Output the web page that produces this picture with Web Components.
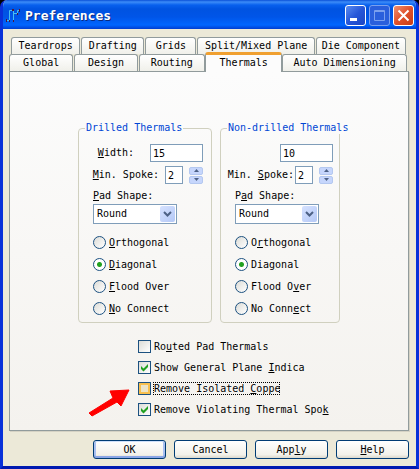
<!DOCTYPE html>
<html lang="en">
<head>
<meta charset="utf-8">
<title>Preferences</title>
<style>
    body{
        margin:0;
        background:#000;
        color:#000;
        font:10px/12px "DejaVu Sans Mono","Liberation Mono",monospace;
    }
</style>
</head>
<body>

<pref-window caption="Preferences">
    <tab-row slot="tabs" back>
        <tab-item size="69">Teardrops</tab-item>
        <tab-item size="63">Drafting</tab-item>
        <tab-item size="51">Grids</tab-item>
        <tab-item size="117">Split/Mixed Plane</tab-item>
        <tab-item size="90">Die Component</tab-item>
    </tab-row>
    <tab-row slot="tabs">
        <tab-item size="64">Global</tab-item>
        <tab-item size="63">Design</tab-item>
        <tab-item size="66">Routing</tab-item>
        <tab-item size="77" active>Thermals</tab-item>
        <tab-item size="124">Auto Dimensioning</tab-item>
    </tab-row>

    <thermals-page></thermals-page>

    <dialog-button slot="buttons" primary>OK</dialog-button>
    <dialog-button slot="buttons">Cancel</dialog-button>
    <dialog-button slot="buttons">App<u>l</u>y</dialog-button>
    <dialog-button slot="buttons"><u>H</u>elp</dialog-button>
</pref-window>

<template id="window-template">
    <style>
        :host{
            display:flex;
            flex-direction:column;
            box-sizing:border-box;
            min-height:100vh;
            background:#ece9d8;
            border:3px solid #0831d9;
            border-top:0;
            border-bottom-color:#0019b0;
            border-radius:7px 7px 0 0;
            overflow:hidden;
        }
        header{
            display:flex;
            align-items:center;
            gap:3px;
            height:29px;
            margin:0 -3px;
            padding:2px 5px 0 6px;
            box-sizing:border-box;
            background:linear-gradient(#0a50d8 0,#3c8cf8 2px,#0860ee 5px,#0053e1 9px,#0055e8 17px,#0066ff 25px,#003dd0 29px);
        }
        h1{
            flex:1;
            margin:0;
            font-size:13px;
            line-height:16px;
            padding-left:1px;
            color:#fff;
            text-shadow:1px 1px #0a2a80;
        }
        header button{
            width:21px;
            height:21px;
            padding:0;
            border:1px solid #fff;
            border-radius:3px;
            background:linear-gradient(135deg,#5a8cf0,#2656d8 50%,#1c46c4);
        }
        header button:disabled{
            border-color:#7ba0ee;
            background:#2a5fdc;
        }
        header .close{
            background:linear-gradient(135deg,#f09070,#e0512c 50%,#c83c14);
        }
        header svg{
            display:block;
        }
        .body{
            flex:1;
            display:flex;
            flex-direction:column;
            padding:8px 7px 7px 6px;
        }
        .panel{
            flex:1;
            border:1px solid #919b9c;
            box-shadow:1px 1px #d5d2c4;
            background:linear-gradient(#fcfcfc,#f4f2ee);
        }
        footer{
            display:flex;
            justify-content:flex-end;
            gap:8px;
            margin-top:9px;
        }
    </style>
    <header>
        <svg width="15" height="15" viewBox="0 0 15 15" fill="none">
            <path d="M1 12.5H3.500V2.500H7.500V6M7.500 13V5.500H11.500V2.500H14" stroke="#48c0f0"/>
            <path d="M0 11h1v3H0zM3 12h1v2H3zM6 1h2v2H6zM7 12h1v2H7zM13 1h1v3h-1zM11 5h1v2h-1z" fill="#501838"/>
        </svg>
        <h1></h1>
        <button aria-label="Minimize"><svg width="19" height="19"><path d="M4 12h7v3H4z" fill="#fff"/></svg></button>
        <button aria-label="Maximize" disabled><svg width="19" height="19" fill="none" stroke="#7ba0ee"><path d="M4.500 4.500h10v10h-10zM4 5.500h11"/></svg></button>
        <button class="close" aria-label="Close"><svg width="19" height="19" stroke="#fff" stroke-width="2"><path d="M4.500 4.500l10 10M14.500 4.500l-10 10"/></svg></button>
    </header>
    <div class="body">
        <nav role="tablist"><slot name="tabs"></slot></nav>
        <div class="panel"><slot></slot></div>
        <footer><slot name="buttons"></slot></footer>
    </div>
</template>

<template id="page-template">
    <style>
        :host{
            display:block;
            padding:50px 0 14px;
        }
        .content{
            position:relative;
            width:fit-content;
            margin:0 auto;
        }
        .groups{
            display:flex;
            gap:8px;
        }
        .checks{
            display:flex;
            flex-direction:column;
            gap:8px;
            margin:17px 0 0 60px;
        }
        .arrow{
            position:absolute;
            left:10px;
            bottom:-2px;
        }
    </style>
    <div class="content">
        <div class="groups">
            <thermal-group caption="Drilled Thermals" value="15" widthlabel="&lt;u&gt;W&lt;/u&gt;idth:"
                spoke="&lt;u&gt;M&lt;/u&gt;in. Spoke:" shape="&lt;u&gt;P&lt;/u&gt;ad Shape:"
                options="&lt;u&gt;O&lt;/u&gt;rthogonal|&lt;u&gt;D&lt;/u&gt;iagonal|&lt;u&gt;F&lt;/u&gt;lood Over|&lt;u&gt;N&lt;/u&gt;o Connect"></thermal-group>
            <thermal-group narrow caption="Non-drilled Thermals" value="10"
                spoke="Min. &lt;u&gt;S&lt;/u&gt;poke:" shape="P&lt;u&gt;a&lt;/u&gt;d Shape:"
                options="O&lt;u&gt;r&lt;/u&gt;thogonal|Dia&lt;u&gt;g&lt;/u&gt;onal|Flood O&lt;u&gt;v&lt;/u&gt;er|No Conn&lt;u&gt;e&lt;/u&gt;ct"></thermal-group>
        </div>
        <div class="checks">
            <check-option>Ro<u>u</u>ted Pad Thermals</check-option>
            <check-option checked>Show General Plane <u>I</u>ndica</check-option>
            <check-option focused>Remove Isolated <u>C</u>oppe</check-option>
            <check-option checked>Remove Violating Thermal Spo<u>k</u></check-option>
        </div>
        <svg class="arrow" width="42" height="30" viewBox="0 0 42 30">
            <path d="M1 25L25 10L22 3L41 2L33 18L29 14L4 28z" fill="#f00" stroke="#f00"/>
        </svg>
    </div>
</template>

<script>
class PrefWindow extends HTMLElement{
    constructor(){
        super()
        this.attachShadow({mode:"open"})
    }
    connectedCallback(){
        let plantilla = document.getElementById("window-template")
        this.shadowRoot.appendChild(plantilla.content.cloneNode(true))
        this.shadowRoot.querySelector("h1").textContent = this.getAttribute("caption")
    }
}

class TabRow extends HTMLElement{
    constructor(){
        super()
        this.attachShadow({mode:"open"})
    }
    connectedCallback(){
        this.shadowRoot.innerHTML = `
            <style>
                :host{
                    display:flex;
                    gap:1px;
                    height:17px;
                    margin-right:2px;
                }
                :host([back]){
                    margin-left:2px;
                    margin-right:3px;
                }
            </style>
            <slot></slot>
        `
    }
}

class TabItem extends HTMLElement{
    constructor(){
        super()
        this.attachShadow({mode:"open"})
    }
    connectedCallback(){
        this.style.setProperty("--size",this.getAttribute("size"))
        this.shadowRoot.innerHTML = `
            <style>
                :host{
                    display:flex;
                    flex:var(--size) 1 0;
                    min-width:0;
                }
                button{
                    flex:1;
                    min-width:0;
                    padding:0;
                    border:1px solid #919b9c;
                    border-bottom:0;
                    border-radius:3px 3px 0 0;
                    background:linear-gradient(#fff,#f0f0ea);
                    color:inherit;
                    font:inherit;
                    white-space:nowrap;
                }
                :host([active]){
                    z-index:1;
                    margin:-2px -1px -1px;
                }
                :host([active]) button{
                    padding-bottom:2px;
                    border-top:3px solid #f0a030;
                    background:#fcfcfc;
                }
            </style>
            <button role="tab" aria-selected="${this.hasAttribute("active")}"><slot></slot></button>
        `
    }
}

class DialogButton extends HTMLElement{
    constructor(){
        super()
        this.attachShadow({mode:"open"})
    }
    connectedCallback(){
        this.shadowRoot.innerHTML = `
            <style>
                :host{
                    display:block;
                }
                button{
                    display:block;
                    width:73px;
                    height:19px;
                    padding:0;
                    border:1px solid #003c74;
                    border-radius:3px;
                    background:linear-gradient(#fff,#f2f1ea 80%,#dcd8cc);
                    color:inherit;
                    font:inherit;
                }
                :host([primary]) button{
                    box-shadow:inset 0 1px #cee0fa,inset 0 -2px #8ba6e6,inset 2px 0 #a9c0f0,inset -2px 0 #a9c0f0;
                }
            </style>
            <button><slot></slot></button>
        `
    }
}

class CheckOption extends HTMLElement{
    constructor(){
        super()
        this.attachShadow({mode:"open"})
    }
    connectedCallback(){
        this.shadowRoot.innerHTML = `
            <style>
                :host{
                    display:block;
                    height:13px;
                }
                label{
                    display:flex;
                    align-items:center;
                    gap:2px;
                    width:fit-content;
                }
                .box{
                    display:grid;
                }
                input,svg{
                    grid-area:1/1;
                }
                input{
                    appearance:none;
                    width:13px;
                    height:13px;
                    margin:0;
                    border:1px solid #1c5180;
                    background:linear-gradient(135deg,#dcdcd7,#fff);
                }
                svg{
                    display:none;
                    pointer-events:none;
                }
                input:checked + svg{
                    display:block;
                }
                .text{
                    height:13px;
                    line-height:14px;
                    padding-left:1px;
                    white-space:nowrap;
                    overflow:hidden;
                }
                :host([focused]) input{
                    background:#ece4c8;
                    box-shadow:inset 0 0 0 2px #f8c050;
                }
                :host([focused]) .text{
                    outline:1px dotted #000;
                    outline-offset:-1px;
                }
            </style>
            <label>
                <span class="box">
                    <input type="checkbox" ${this.hasAttribute("checked") ? "checked" : ""}>
                    <svg width="13" height="13" fill="#21a121"><path d="M3 5l2.500 2.500L10 3v3l-4.500 4.500L3 8z"/></svg>
                </span>
                <span class="text"><slot></slot></span>
            </label>
        `
    }
}

class ThermalGroup extends HTMLElement{
    constructor(){
        super()
        this.attachShadow({mode:"open"})
    }
    connectedCallback(){
        let attr = (name) => this.getAttribute(name)
        let radios = attr("options").split("|").map((text,i) => `
            <label class="radio"><input type="radio" name="connect" ${i === 1 ? "checked" : ""}>${text}</label>
        `).join("")

        this.shadowRoot.innerHTML = `
            <style>
                :host{
                    display:block;
                    width:134px;
                    --gap:6px;
                    --edge:8px;
                }
                :host([narrow]){
                    width:120px;
                    --gap:1px;
                    --edge:6px;
                }
                fieldset{
                    min-width:0;
                    margin:0;
                    padding:10px var(--edge) 7px 14px;
                    border:1px solid #d0d0bf;
                    border-radius:4px;
                }
                legend{
                    margin-left:-8px;
                    padding:0 1px;
                    color:#0046d5;
                    white-space:nowrap;
                }
                :host([narrow]) legend{
                    min-width:122px;
                    box-sizing:border-box;
                }
                .row{
                    display:flex;
                    justify-content:flex-end;
                    align-items:center;
                    height:18px;
                    margin-bottom:4px;
                    white-space:nowrap;
                }
                .width{
                    gap:16px;
                }
                input,select{
                    box-sizing:border-box;
                    border:1px solid #7f9db9;
                    border-radius:0;
                    background:#fff;
                    color:inherit;
                    font:inherit;
                }
                input[type=text]{
                    width:53px;
                    height:18px;
                    padding:0 2px;
                }
                input[type=text].spoke{
                    width:18px;
                    margin-left:var(--gap);
                }
                .spin{
                    display:grid;
                    gap:1px;
                    margin-left:6px;
                }
                .spin button{
                    width:14px;
                    height:8px;
                    padding:0;
                    border:1px solid #b4c8f0;
                    border-radius:2px;
                    background:#c6d6fc;
                }
                .spin svg{
                    display:block;
                    margin:auto;
                }
                .shape{
                    display:block;
                    margin-top:6px;
                }
                .combo{
                    position:relative;
                    width:84px;
                    margin:2px 0 12px;
                }
                select{
                    appearance:none;
                    display:block;
                    width:100%;
                    height:20px;
                    padding:0 3px;
                }
                .combo svg{
                    position:absolute;
                    top:2px;
                    right:2px;
                    border-radius:2px;
                    background:linear-gradient(135deg,#d6e2ff,#b4c8f6);
                    pointer-events:none;
                }
                .radios{
                    display:grid;
                    gap:9px;
                }
                .radio{
                    display:flex;
                    align-items:center;
                    height:13px;
                    white-space:pre;
                }
                .radio input{
                    appearance:none;
                    width:13px;
                    height:13px;
                    margin:0 3px 0 0;
                    border-color:#1c5180;
                    border-radius:50%;
                    background:linear-gradient(135deg,#dcdcd7,#fff);
                }
                .radio input:checked{
                    background:radial-gradient(circle,#21a121 2px,transparent 3px),#fff;
                }
            </style>
            <fieldset>
                <legend>${attr("caption")}</legend>
                <div class="row width">
                    ${attr("widthlabel") ? `<label for="width">${attr("widthlabel")}</label>` : ""}
                    <input type="text" id="width" aria-label="Width" value="${attr("value")}">
                </div>
                <div class="row">
                    <label for="spoke">${attr("spoke")}</label>
                    <input type="text" class="spoke" id="spoke" value="2">
                    <span class="spin">
                        <button aria-label="Up"><svg width="5" height="3" fill="#4d6185"><path d="M0 3l2.500-3L5 3z"/></svg></button>
                        <button aria-label="Down"><svg width="5" height="3" fill="#4d6185"><path d="M0 0l2.500 3L5 0z"/></svg></button>
                    </span>
                </div>
                <label class="shape" for="shape">${attr("shape")}</label>
                <div class="combo">
                    <select id="shape"><option>Round</option></select>
                    <svg width="15" height="16" fill="none" stroke="#4d6185" stroke-width="2"><path d="M4 6l3.500 3.500L11 6"/></svg>
                </div>
                <div class="radios">${radios}</div>
            </fieldset>
        `
    }
}

class ThermalsPage extends HTMLElement{
    constructor(){
        super()
        this.attachShadow({mode:"open"})
    }
    connectedCallback(){
        let plantilla = document.getElementById("page-template")
        this.shadowRoot.appendChild(plantilla.content.cloneNode(true))
    }
}

customElements.define("pref-window",PrefWindow)
customElements.define("tab-row",TabRow)
customElements.define("tab-item",TabItem)
customElements.define("dialog-button",DialogButton)
customElements.define("check-option",CheckOption)
customElements.define("thermal-group",ThermalGroup)
customElements.define("thermals-page",ThermalsPage)
</script>
</body>
</html>
